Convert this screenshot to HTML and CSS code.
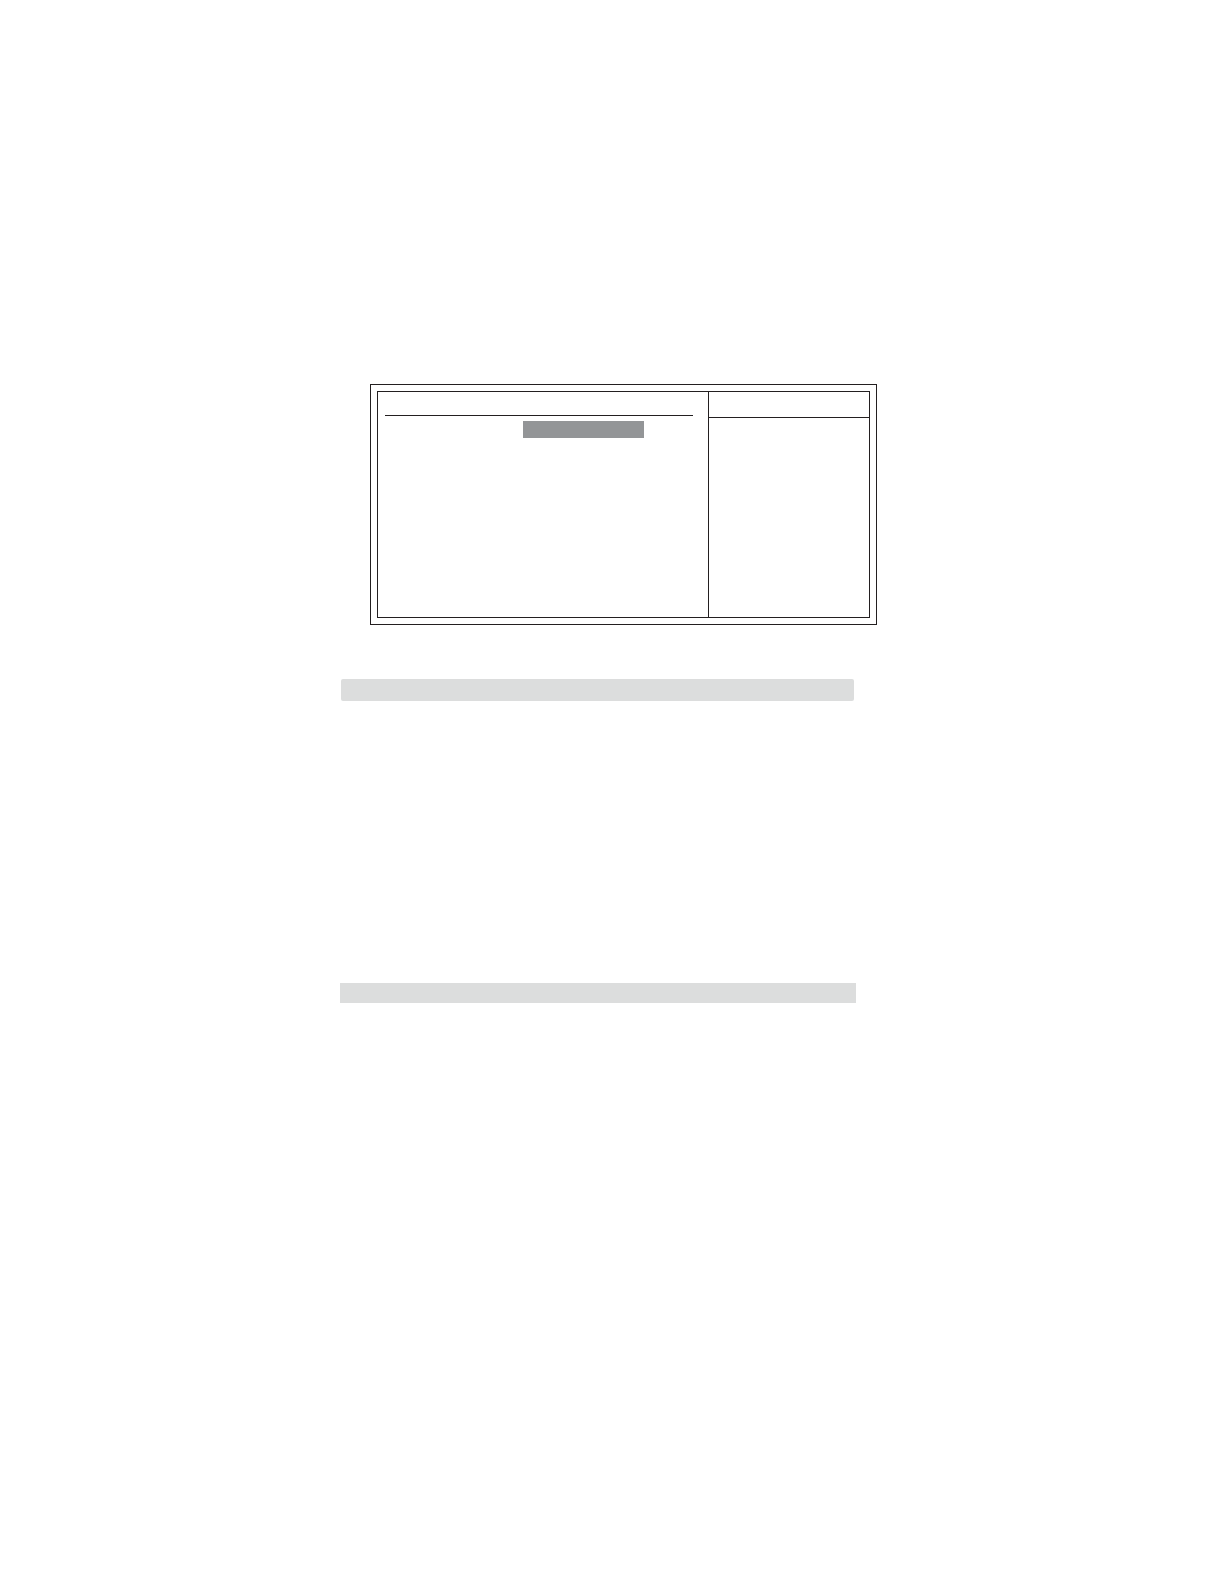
FILE: index.html
```html
<!DOCTYPE html>
<html lang="en">
<head>
<meta charset="utf-8">
<title>Setup</title>
<link rel="stylesheet" href="styles.css">
</head>
<body>
<main class="page">
  <div class="content">
    <section class="screen">
      <div class="screen-inner">
        <div class="options">
          <div class="options-head"></div>
          <div class="option-row"><div class="selected"></div></div>
        </div>
        <aside class="help">
          <div class="help-head"></div>
        </aside>
      </div>
    </section>
    <div class="band"></div>
    <div class="band band-wide"></div>
  </div>
</main>
</body>
</html>
```

FILE: styles.css
```css
* {
  box-sizing: border-box;
}

body {
  margin: 0;
  background: #fff;
  color: #231f20;
  font-family: "Liberation Sans", Arial, sans-serif;
}

.page {
  display: grid;
  grid-template-columns: 340fr 537fr 347fr;
  min-height: 100vh;
  padding-top: 384px;
}

.content {
  grid-column: 2;
  min-width: 0;
}

/* Double-framed setup screen */
.screen {
  margin-left: 30px;
  padding: 6px;
  border: 1px solid #231f20;
}

.screen-inner {
  display: grid;
  grid-template-columns: 330fr 161fr;
  min-height: 227px;
  border: 1px solid #231f20;
}

.options {
  padding: 0 15px 0 7px;
}

.options-head {
  height: 24px;
  border-bottom: 1px solid #231f20;
}

.option-row {
  display: grid;
  grid-template-columns: 138fr 121fr 49fr;
  padding-top: 5px;
}

.selected {
  grid-column: 2;
  height: 17px;
  background: #939597;
}

.help {
  border-left: 1px solid #231f20;
}

.help-head {
  height: 26px;
  border-bottom: 1px solid #231f20;
}

/* Section heading bands */
.band {
  height: 22px;
  margin: 54px 23px 0 1px;
  border-radius: 2px;
  background: #dcdddd;
}

.band-wide {
  height: 20px;
  margin: 282px 21px 0 0;
  border-radius: 0;
}
```
